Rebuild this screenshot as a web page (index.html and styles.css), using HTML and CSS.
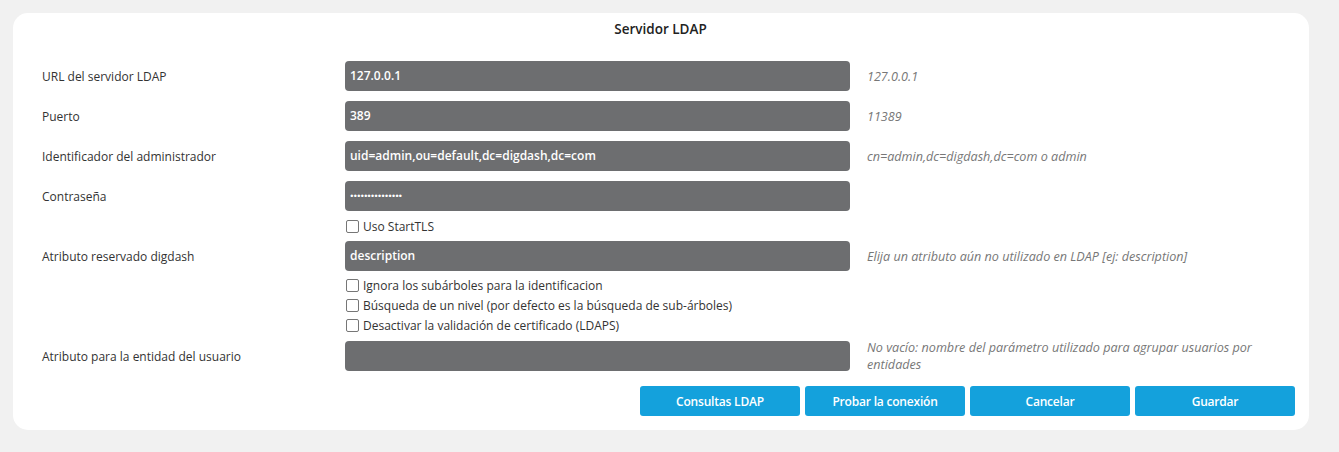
FILE: index.html
```html
<!DOCTYPE html>
<html lang="es">
<head>
<meta charset="utf-8">
<title>Servidor LDAP</title>
<link rel="stylesheet" href="styles.css">
</head>
<body>
<div class="card">
  <div class="title">Servidor LDAP</div>
  <div class="form">
    <div class="row">
      <div class="label">URL del servidor LDAP</div>
      <div class="field">127.0.0.1</div>
      <div class="hint">127.0.0.1</div>
    </div>
    <div class="row">
      <div class="label">Puerto</div>
      <div class="field">389</div>
      <div class="hint">11389</div>
    </div>
    <div class="row">
      <div class="label">Identificador del administrador</div>
      <div class="field">uid=admin,ou=default,dc=digdash,dc=com</div>
      <div class="hint">cn=admin,dc=digdash,dc=com o admin</div>
    </div>
    <div class="row">
      <div class="label">Contraseña</div>
      <div class="field pwd">•••••••••••••••</div>
      <div class="hint"></div>
    </div>
    <div class="checks checks-single">
      <label class="check"><span class="box"></span>Uso StartTLS</label>
    </div>
    <div class="row">
      <div class="label">Atributo reservado digdash</div>
      <div class="field">description</div>
      <div class="hint">Elija un atributo aún no utilizado en LDAP [ej: description]</div>
    </div>
    <div class="checks checks-multi">
      <label class="check"><span class="box"></span>Ignora los subárboles para la identificacion</label>
      <label class="check"><span class="box"></span>Búsqueda de un nivel (por defecto es la búsqueda de sub-árboles)</label>
      <label class="check"><span class="box"></span>Desactivar la validación de certificado (LDAPS)</label>
    </div>
    <div class="row row-last">
      <div class="label">Atributo para la entidad del usuario</div>
      <div class="field"></div>
      <div class="hint">No vacío: nombre del parámetro utilizado para agrupar usuarios por entidades</div>
    </div>
  </div>
  <div class="buttons">
    <button class="btn">Consultas LDAP</button>
    <button class="btn">Probar la conexión</button>
    <button class="btn">Cancelar</button>
    <button class="btn">Guardar</button>
  </div>
</div>
</body>
</html>
```

FILE: styles.css
```css
html, body {
  margin: 0;
  padding: 0;
  background: #f1f1f1;
  font-family: "Open Sans", "Liberation Sans", sans-serif;
  font-size: 12px;
  color: #333;
}

body {
  padding: 13px 30px 22px 13px;
}

.card {
  background: #fff;
  border-radius: 15px;
  width: 1296px;
  height: 417px;
  box-sizing: border-box;
  padding: 8px 14px 0 29px;
}

.title {
  text-align: center;
  font-size: 13.5px;
  font-weight: 600;
  color: #222;
  line-height: 16px;
  margin-left: -16px;
}

.form {
  margin-top: 24px;
}

.row {
  display: grid;
  grid-template-columns: 286px 505px 395px;
  column-gap: 17px;
  align-items: center;
  min-height: 30px;
  margin-bottom: 10px;
}

.row-last {
  margin-bottom: 0;
}

.label {
  color: #333;
  line-height: 17px;
}

.field {
  height: 30px;
  background: #6d6e70;
  border-radius: 4px;
  color: #fff;
  font-weight: 600;
  line-height: 30px;
  padding-left: 5px;
  box-sizing: border-box;
  white-space: nowrap;
  overflow: hidden;
}

.field.pwd {
  font-size: 9.5px;
  letter-spacing: -0.1px;
}

.hint {
  font-style: italic;
  font-size: 12.6px;
  color: #777;
  line-height: 17px;
}

.checks {
  display: flex;
  flex-direction: column;
  padding-left: 303px;
}

.checks-single {
  margin-top: -5px;
  margin-bottom: 5px;
}

.checks-multi {
  margin-top: -6px;
  margin-bottom: 4px;
}

.check {
  display: flex;
  align-items: center;
  height: 20px;
  color: #333;
}

.box {
  width: 11px;
  height: 11px;
  border: 1px solid #767676;
  border-radius: 2px;
  margin: 0 4px 0 1px;
  background: #fff;
}

.buttons {
  display: flex;
  justify-content: flex-end;
  gap: 5px;
  margin-top: 13px;
}

.btn {
  width: 160px;
  height: 30px;
  border: none;
  border-radius: 3px;
  background: #14a1dc;
  color: #fff;
  font-family: "Open Sans", "Liberation Sans", sans-serif;
  font-size: 12px;
  font-weight: 600;
  letter-spacing: -0.2px;
  padding: 0;
}
```
